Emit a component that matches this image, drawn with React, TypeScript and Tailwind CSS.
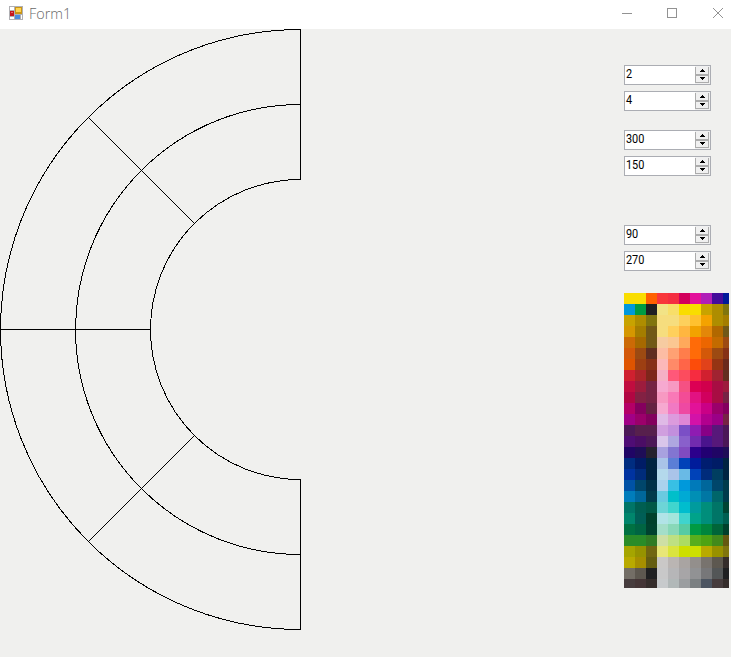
import React from "react";

const swatches: string[] = [
  "f9dd00 f9dd00 ff6000 f8363a f42d40 d2005c e3119b b01fb7 440c9a 001a99",
  "0098db 009b43 1f2022 f2e386 f8de69 f9dd00 f9dd00 c8a300 ae8d00 80750e",
  "c8a300 ae8d00 80750e f6dd7e f6dd7e fdd05c ffc12e f4a200 ae8d00 a47d00",
  "d59700 a47d00 715817 f6dd7e ffd05c ffb640 f2a200 e38709 b16800 715817",
  "cc6a05 a66900 715817 f6cba1 fbc792 ffa95b ff6b08 ec6600 c36b00 9d4a12",
  "d35809 9c4a12 602d20 fcbca4 ffa173 ff7d4b ff6b08 d35809 9c4a12 863116",
  "df5400 9d3f12 863116 fcb8b8 ff8a68 ff6548 fc4c0a e1421a 953413 6a2a1c",
  "cf202f ab2429 7e261b f5b0c6 ff5879 fc4c5e f62c40 d1202f a02331 632e20",
  "c10d3f 9d1c3d 762344 f6a9d0 f799c2 f55183 dc0054 d1004c a80d43 9d1c3d",
  "b10642 832143 762344 f799c2 f979b7 f34c96 e21282 d1005e a80d43 762344",
  "b40066 85005e 652242 f6a9d0 f179c3 ee49a2 e21299 ca0086 9b006b 83005e",
  "a10086 9b006b 83005e dfbae6 dc9bdd df87d5 d312a8 b2008e 9b0087 762344",
  "4c1957 57204d 57204d d09fdf c28fdd 7b4fc6 8f1cb2 880086 57187a 4b1757",
  "4f0d75 4b0d65 4c1757 d9c6ea aea7e0 8960cb 722baf 4a148d 57187a 4b1757",
  "200565 1e0d57 25212f a8a1df 8275d1 814bc0 2c008c 220072 200565 1e0d57",
  "002d80 001c66 002342 a9c4e8 5b7ed6 0042b8 001c9b 001d70 001c66 002342",
  "0033a0 002c7b 002342 b4d9ec aac4e9 69bae6 0042b8 002c7b 003e60 002342",
  "0052a5 00466b 003148 abd2ed 38c0e4 0099db 007aba 00679b 00466b 003b4b",
  "007dbb 00679b 003b4b 6acae0 00bfca 00aad4 008fb5 0077a4 00666a 003b4b",
  "007567 005f51 005946 6dd5d7 40d5ce 00bdce 009b9d 008e7b 007567 004432",
  "00856c 005f56 00402c b1e3e7 a4e5dc 3fd4ce 00a38a 008e7b 007567 005f51",
  "007142 006542 00422f a4dec9 88d8b8 56cba3 009a43 00853d 006539 00402c",
  "2a8c28 2a8c28 307b24 cedfa5 bee082 acdc63 58ae1d 4ea313 438a1b 655810",
  "a5a500 969300 716611 e8e678 dae43f cddf00 cddf00 b9aa00 989100 80750e",
  "b9aa00 a68f00 645d11 cac8c7 bab5b3 a9a4a2 938f8c 78736e 5d5850 352d2b",
  "736e66 5d5850 1f2022 c8c8c9 b6b6b8 a7a5a7 919294 777779 535657 1f2022",
  "463c3d 443536 352d2b c7cacc b1b8b8 9b9ea0 7b8082 4c5561 463c3d 352d2b",
];

function ArrowButton({ down = false }: { down?: boolean }) {
  return (
    <div className={`flex h-2 w-[14px] items-start justify-center border-[#acacac] bg-[#f0f0f0] ${down ? "border pt-px" : "border-x border-b pt-0.5"}`}>
      <svg width="5" height="3" viewBox="0 0 5 3" shapeRendering="crispEdges">
        <path d={down ? "M0 0h5v1H4v1H3v1H2V2H1V1H0z" : "M2 0h1v1h1v1h1v1H0V2h1V1h1z"} fill="#000" />
      </svg>
    </div>
  );
}

function NumericBox({ value }: { value: string }) {
  return (
    <div className="flex h-5 w-[87px] justify-between border border-[#abadb3] bg-white">
      <span className="origin-left scale-x-[.91] pl-px text-[12px] leading-[17px] text-black">{value}</span>
      <div className="flex flex-col bg-[#f0f0f0] pr-px pt-px">
        <ArrowButton />
        <ArrowButton down />
      </div>
    </div>
  );
}

function TitleBar() {
  return (
    <header className="flex h-[29px] justify-between bg-white">
      <div className="flex pl-[9px]">
        <svg className="mt-1.5" width="14" height="14" viewBox="0 0 14 14" shapeRendering="crispEdges">
          <path fill="#b0b0b4" d="M0 0h14v14H0z" />
          <path fill="#fff" d="M1 1h4v3H1zM1 11h4v2H1z" />
          <path fill="#c5161d" d="M1 5h4v5H1z" />
          <path fill="#e36b6b" d="M2 6h2v1H2z" />
          <path fill="#c99516" d="M6 1h7v7H6z" />
          <path fill="#ffd451" d="M7 2h5v4H7z" />
          <path fill="#4b8ddd" d="M6 9h5v4H6z" />
          <path fill="#fff" d="M12 9h1v4h-1z" />
        </svg>
        <span className="ml-[6px] origin-left scale-x-[.96] text-[15px] font-light leading-[27px] text-[#686868]">Form1</span>
      </div>
      <svg width="131" height="29" viewBox="0 0 131 29" fill="none" stroke="#929292">
        <path d="M22 13.5h10M67.5 8.5h9v9h-9z" shapeRendering="crispEdges" />
        <path d="M113 8l10 10M123 8l-10 10" />
      </svg>
    </header>
  );
}

export default function App() {
  return (
    <div className="flex h-[657px] w-[731px] flex-col overflow-hidden bg-[#f0f0ee] font-['Open_Sans','Noto_Sans',sans-serif]">
      <TitleBar />
      <main className="flex flex-1">
        <svg width="624" height="628" viewBox="0 0 624 628" fill="none" stroke="#000" shapeRendering="crispEdges">
          <path d="M300.5 .5A300 300 0 0 0 300.5 600.5V450.5A150 150 0 0 1 300.5 150.5Z" />
          <path d="M300.5 75.5A225 225 0 0 0 300.5 525.5M.5 300.5H150.5M88.5 88.5L194.5 194.5M88.5 512.5L194.5 406.5" />
        </svg>
        <aside className="flex flex-col pt-9 font-[Roboto,'Liberation_Sans',sans-serif]">
          <div className="flex flex-col gap-1.5">
            <NumericBox value="2" />
            <NumericBox value="4" />
          </div>
          <div className="mt-[19px] flex flex-col gap-1.5">
            <NumericBox value="300" />
            <NumericBox value="150" />
          </div>
          <div className="mt-[49px] flex flex-col gap-1.5">
            <NumericBox value="90" />
            <NumericBox value="270" />
          </div>
          <div className="mt-[22px] h-[295px] w-[105px] overflow-hidden">
            {swatches.map((row, y) => (
              <div key={y} className="flex h-[11px] w-[110px]">
                {row.split(" ").map((color, x) => (
                  <div key={x} className="h-[11px] w-[11px] shrink-0" style={{ backgroundColor: `#${color}` }} />
                ))}
              </div>
            ))}
          </div>
        </aside>
      </main>
    </div>
  );
}
